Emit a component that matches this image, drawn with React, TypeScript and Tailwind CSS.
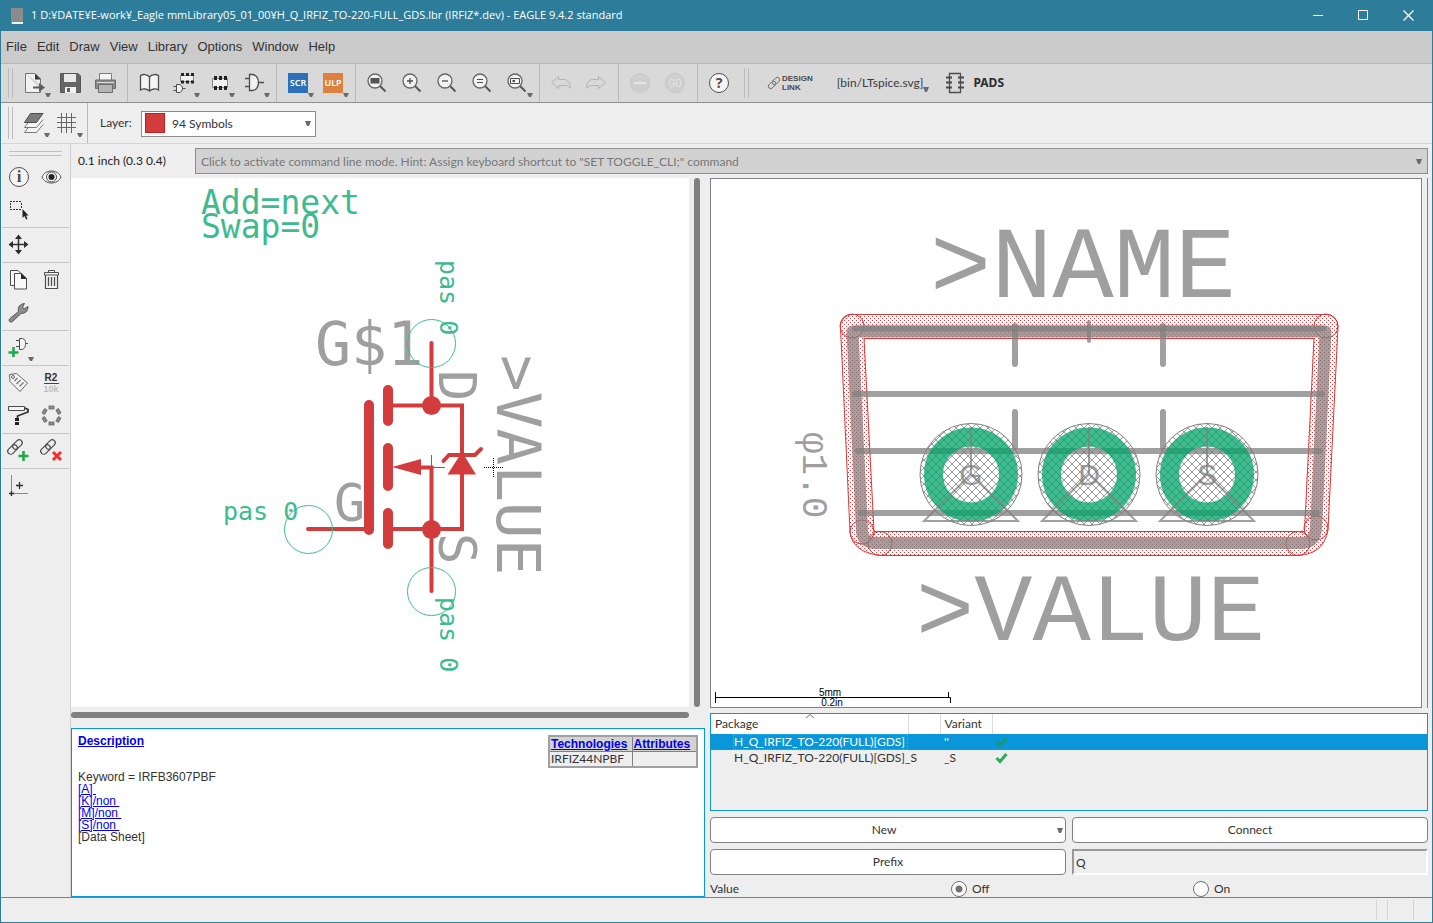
import type { ReactNode } from "react";

function Caret({ className = "" }: { className?: string }) {
  return (
    <svg width="6" height="5" viewBox="0 0 6 5" className={className} aria-hidden="true">
      <path d="M0 0H6L4 5H2Z" fill="#6a6a6a" />
    </svg>
  );
}

/* One slot of the main toolbar, icons are drawn on a 35x38 grid */
function Tool({ label, menu, children }: { label: string; menu?: boolean; children: ReactNode }) {
  return (
    <button type="button" aria-label={label} className="h-[38px] w-[35px] shrink-0">
      <svg width="35" height="38" viewBox="0 0 35 38" fill="none" stroke="#4d4d4d">
        {children}
        {menu && <path d="M27 29H33L31 33H29Z" fill="#6a6a6a" stroke="none" />}
      </svg>
    </button>
  );
}

/* One slot of the left palette, 33x33 grid */
function SideTool({ label, children }: { label: string; children: ReactNode }) {
  return (
    <button type="button" aria-label={label} className="h-[33px] w-[33px] shrink-0">
      <svg width="33" height="33" viewBox="0 0 33 33" fill="none" stroke="#4d4d4d" className="overflow-visible">
        {children}
      </svg>
    </button>
  );
}

function SideGroup({ children }: { children: ReactNode }) {
  return <div className="mx-px flex flex-wrap border-b border-[#c6c6c6] pb-px">{children}</div>;
}

function Sep() {
  return <div className="mx-1 w-px shrink-0 self-stretch bg-[#b9b9b9]" />;
}

function Grip() {
  return <div className="my-1 ml-[7px] w-[5px] shrink-0 self-stretch border-x border-[#bcbcbc]" />;
}

function Magnifier({ children }: { children: ReactNode }) {
  return (
    <>
      <path d="M20 22L25.500 27.500" stroke="#555" strokeWidth="2" />
      <circle cx="15" cy="17" r="7" fill="#f2f2f2" stroke="#666" strokeWidth="1.300" />
      {children}
    </>
  );
}

function ChainLink() {
  return (
    <g transform="rotate(-45 13 13)" strokeWidth="1.200">
      <rect x="4" y="10" width="11" height="6" rx="3" />
      <rect x="11" y="10" width="11" height="6" rx="3" />
    </g>
  );
}

function MainToolbar() {
  return (
    <div className="flex h-[39px] items-center border-b border-[#8f8f8f] bg-[#d9d9d9]">
      <Grip />
      <div className="flex items-center self-stretch pl-[5px]">
        <Tool label="Open" menu>
          <path d="M7.500 9.500H17L22.500 15V20M22.500 26V28.500H7.500V9.500" fill="#f2f2f2" stroke="#777" />
          <path d="M17 9.500V15.500H23Z" fill="#3a3a3a" stroke="none" />
          <path d="M15 22.500H21V19L27 23.500L21 28V24.500H15Z" fill="#5c5c5c" stroke="none" />
        </Tool>
        <Tool label="Save">
          <path d="M7.500 9.500H25L27.500 12V28.500H7.500Z" fill="#666" stroke="#555" />
          <path d="M11 10H23V18H11Z" fill="#e8e8e8" stroke="none" />
          <path d="M12 23H23V29H12Z" fill="#f2f2f2" stroke="none" />
          <path d="M14 24H17V28H14Z" fill="#5f5f5f" stroke="none" />
        </Tool>
        <Tool label="Print">
          <path d="M11.500 16V9.500H23.500V16" fill="#f4f4f4" stroke="#7b7b7b" />
          <path d="M7.500 16H27.500V24.500H7.500Z" fill="#8a8a8a" stroke="#6d6d6d" />
          <path d="M9 18.500H26" stroke="#dcdcdc" />
          <path d="M10.500 20.500H24.500V28.500H10.500Z" fill="#b5b5b5" stroke="#6d6d6d" />
        </Tool>
        <Sep />
        <Tool label="Use library">
          <path
            d="M17.500 13C15 10 11 10 8.500 11.500V26C11 24.500 15 24.500 17.500 27C20 24.500 24 24.500 26.500 26V11.500C24 10 20 10 17.500 13ZM17.500 13V26"
            fill="#f4f4f4"
            strokeWidth="1.300"
          />
        </Tool>
        <Tool label="Device" menu>
          <path d="M13.500 11.500H26.500V17.500H13.500Z" fill="#f0f0f0" stroke="#888" />
          <path d="M14 10.500H27M14 18H27" stroke="#222" strokeWidth="3" strokeDasharray="3 2" />
          <path d="M9.500 20.500H12C14 20.500 15.500 22.500 15.500 24.500C15.500 26.500 14 28.500 12 28.500H9.500ZM6.500 22.500H9.500M6.500 26.500H9.500M15.500 24.500H18.500" fill="#f0f0f0" />
        </Tool>
        <Tool label="Package" menu>
          <path d="M10.500 14.500H25.500V23.500H10.500Z" fill="#f0f0f0" stroke="#888" />
          <path d="M12 14H25M12 24H25" stroke="#222" strokeWidth="4" strokeDasharray="3 2" />
        </Tool>
        <Tool label="Symbol" menu>
          <path d="M12.500 10.500H15C19.500 10.500 21.500 15 21.500 18.500C21.500 22 19.500 26.500 15 26.500H12.500ZM8 14.500H12.500M8 22.500H12.500M21.500 18.500H27" fill="#f0f0f0" strokeWidth="1.300" />
        </Tool>
        <Sep />
        <Tool label="Run script" menu>
          <path d="M7 9H27V29H7Z" fill="#2b70b8" stroke="none" />
          <text x="17" y="22" textAnchor="middle" fill="#fff" stroke="none" className="font-['Noto_Sans'] text-[9px] font-semibold">SCR</text>
        </Tool>
        <Tool label="Run ULP" menu>
          <path d="M7 9H27V29H7Z" fill="#dd8040" stroke="none" />
          <text x="17" y="22" textAnchor="middle" fill="#fff" stroke="none" className="font-['Noto_Sans'] text-[9px] font-semibold">ULP</text>
        </Tool>
        <Sep />
        <Tool label="Zoom to fit">
          <Magnifier><path d="M10.500 14H19.500V19.500H10.500Z" fill="#555" stroke="none" /></Magnifier>
        </Tool>
        <Tool label="Zoom in">
          <Magnifier><path d="M15 14V20M12 17H18" strokeWidth="1.300" /></Magnifier>
        </Tool>
        <Tool label="Zoom out">
          <Magnifier><path d="M12 17H18" strokeWidth="1.300" /></Magnifier>
        </Tool>
        <Tool label="Redraw">
          <Magnifier><path d="M12 15.500H18M12 18.500H18" /></Magnifier>
        </Tool>
        <Tool label="Zoom select" menu>
          <Magnifier>
            <path d="M10.500 14.500H19.500V19.500H10.500Z" />
            <path d="M12.500 16H15V18H12.500Z" fill="#4d4d4d" stroke="none" />
          </Magnifier>
        </Tool>
        <Sep />
        <Tool label="Undo">
          <path d="M7.500 18.500L14.500 12.500V15.500H20C24 15.500 26.500 19 26.500 24.500C24.500 21.500 22 21.500 20 21.500H14.500V24.500Z" stroke="#b4b4b4" />
        </Tool>
        <Tool label="Redo">
          <path d="M26.500 18.500L19.500 12.500V15.500H14C10 15.500 7.500 19 7.500 24.500C9.500 21.500 12 21.500 14 21.500H19.500V24.500Z" stroke="#b4b4b4" />
        </Tool>
        <Sep />
        <Tool label="Stop">
          <circle cx="17" cy="19" r="9.500" fill="#cfcfcf" stroke="#c6c6c6" />
          <path d="M11 19H23" stroke="#e4e4e4" strokeWidth="2" />
        </Tool>
        <Tool label="Go">
          <circle cx="17" cy="19" r="9.500" fill="#cfcfcf" stroke="#c6c6c6" />
          <text x="17" y="23" textAnchor="middle" fill="#e4e4e4" stroke="none" className="font-['Roboto'] text-[10px]">GO</text>
        </Tool>
        <Sep />
        <Tool label="Help">
          <circle cx="17" cy="19" r="9.500" fill="#f5f5f5" />
          <text x="17" y="24" textAnchor="middle" fill="#4d4d4d" stroke="none" className="font-['Noto_Sans'] text-[14px] font-bold">?</text>
        </Tool>
      </div>
      <Grip />
      <button type="button" className="ml-[18px] flex items-center gap-px text-left">
        <svg width="14" height="14" viewBox="4 4 18 18" fill="none" stroke="#666"><ChainLink /></svg>
        <span className="font-['Liberation_Sans'] text-[8px]/[9px] font-bold text-[#4a4a4a]">DESIGN<br />LINK</span>
      </button>
      <button type="button" className="relative ml-6 text-xs text-[#3a3a3a]">
        [bin/LTspice.svg]
        <Caret className="absolute right-[-6px] bottom-[-1px]" />
      </button>
      <button type="button" className="ml-[22px] flex items-center gap-2">
        <svg width="20" height="22" viewBox="0 0 20 22" fill="none" stroke="#4d4d4d">
          <path d="M4.500 1.500H15.500V20.500H4.500Z" strokeWidth="1.300" />
          <path d="M1 5.500H7M1 10.500H7M1 15.500H7M13 5.500H19M13 10.500H19M13 15.500H19" stroke="#4a4a4a" strokeWidth="2.200" />
        </svg>
        <span className="font-['Noto_Sans'] text-[12px] font-bold text-[#2c2c2c]">PADS</span>
      </button>
    </div>
  );
}

function LayerToolbar() {
  return (
    <div className="flex h-[41px] items-center border-b border-[#d4d4d4] bg-[#eee]">
      <Grip />
      <div className="flex items-center self-stretch pl-1">
        <button type="button" aria-label="Layer settings" className="h-[38px] w-[33px]">
          <svg width="33" height="38" viewBox="0 0 33 38" fill="none" stroke="#777">
            <path d="M13.500 20.500L7.500 28.500H19.500L26 20.500" fill="#f6f6f6" />
            <path d="M13.500 15.500L7.500 23.500H19.500L26 15.500" fill="#f6f6f6" />
            <path d="M13.500 9.500H26L19.500 18.500H7.500Z" fill="#7b7b7b" stroke="#4d4d4d" />
            <path d="M27 29H33L31 33H29Z" fill="#6a6a6a" stroke="none" />
          </svg>
        </button>
        <button type="button" aria-label="Grid" className="h-[38px] w-[33px]">
          <svg width="33" height="38" viewBox="0 0 33 38" fill="none" stroke="#666">
            <path d="M11.500 9V29M16.500 9V29M21.500 9V29M7 13.500H26M7 18.500H26M7 23.500H26" />
            <path d="M27 29H33L31 33H29Z" fill="#6a6a6a" stroke="none" />
          </svg>
        </button>
        <Sep />
      </div>
      <label htmlFor="layer" className="ml-2 w-[41px] text-xs text-[#333]">Layer:</label>
      <div className="relative h-[26px] w-[175px]">
        <select id="layer" className="h-full w-full appearance-none border border-[#8c8c8c] bg-white pl-[30px] text-xs text-[#333]">
          <option>94 Symbols</option>
        </select>
        <span className="pointer-events-none absolute top-[3px] left-1 h-5 w-5 border border-[#c32020] bg-[#d33c3c]" />
        <Caret className="pointer-events-none absolute top-[11px] right-[5px]" />
      </div>
    </div>
  );
}

function SidePalette() {
  return (
    <nav className="w-[70px] shrink-0 border-r border-[#d0d0d0] bg-[#eee] pt-[7px]">
      <div className="mx-2 mb-1 h-[5px] border-y border-[#c0c0c0]" />
      <SideGroup>
        <SideTool label="Info">
          <circle cx="17" cy="17" r="9.500" fill="#f6f6f6" />
          <text x="17" y="22" textAnchor="middle" fill="#4d4d4d" stroke="none" className="font-['Liberation_Serif'] text-[17px] font-bold">i</text>
        </SideTool>
        <SideTool label="Show">
          <path d="M7 17C10 9 23 9 26 17C23 25 10 25 7 17Z" fill="#f6f6f6" />
          <circle cx="16.500" cy="17" r="5" />
          <circle cx="16.500" cy="17" r="3" fill="#222" stroke="none" />
        </SideTool>
        <SideTool label="Group">
          <path d="M8 8.500H20M8 16.500H20M8.500 10V16M19.500 10V16" stroke="#333" strokeDasharray="2 1" />
          <path d="M20.500 16V25L22.500 23L24 26.500L25.500 26L24 22.500H26.500Z" fill="#222" stroke="none" />
        </SideTool>
      </SideGroup>
      <SideGroup>
        <SideTool label="Move">
          <path d="M16.500 9V24M9 16.500H24" stroke="#333" strokeWidth="1.500" />
          <path d="M16.500 6.500L20 11H13ZM16.500 26.500L20 22H13ZM6.500 16.500L11 13V20ZM26.500 16.500L22 13V20Z" fill="#2c2c2c" stroke="none" />
        </SideTool>
      </SideGroup>
      <SideGroup>
        <SideTool label="Copy">
          <path d="M12 22.500H8.500V7.500H16L19.500 11" fill="#f8f8f8" />
          <path d="M12.500 10.500H19.500L24.500 15.500V26H12.500Z" fill="#f8f8f8" />
          <path d="M19 10V16H25Z" fill="#2c2c2c" stroke="none" />
        </SideTool>
        <SideTool label="Delete">
          <path d="M10.500 12V25.500H22.500V12" fill="#f6f6f6" strokeWidth="1.200" />
          <path d="M9.500 9.500H23.500V12H9.500ZM13.500 9V7.500H19.500V9" fill="#f6f6f6" />
          <path d="M13.500 14V23M16.500 14V23M19.500 14V23" strokeWidth="1.300" />
        </SideTool>
        <SideTool label="Change">
          <path
            d="M7.500 23L16.500 15.500C15.500 11 18 8 22.500 7.500L20.500 11L22 13L26 10.500C26 15.500 23 17.500 19 17.500L10.500 25.500C8.500 27 6 25 7.500 23Z"
            fill="#8d8d8d"
            stroke="#555"
          />
        </SideTool>
      </SideGroup>
      <SideGroup>
        <SideTool label="Add">
          <path d="M17.500 7.500H19C23 7.500 23.500 10 23.500 12.500C23.500 15 23 18.500 19 18.500H17.500ZM14 9.500H17.500M14 15.500H17.500M23.500 12.500H26" fill="#f6f6f6" />
          <path d="M11.500 16V26M6.500 21.500H16.500" stroke="#22a84c" strokeWidth="2.600" />
          <path d="M26 26H32L30 30H28Z" fill="#6a6a6a" stroke="none" />
        </SideTool>
      </SideGroup>
      <SideGroup>
        <SideTool label="Name">
          <path d="M7.500 8.500L14.500 7.500L25.500 17L18 25.500L8 15.500Z" fill="#f6f6f6" stroke="#666" />
          <circle cx="11" cy="11" r="1.500" stroke="#666" />
          <path d="M12.500 15L15.500 12M14.500 18L18.500 14M17.500 20.500L21.500 16.500" stroke="#777" strokeWidth="1.400" />
        </SideTool>
        <SideTool label="Value">
          <text x="16" y="15" textAnchor="middle" fill="#333" stroke="none" className="font-['Liberation_Sans'] text-[10px] font-bold">R2</text>
          <path d="M9 17.500H24" stroke="#444" />
          <text x="16" y="26" textAnchor="middle" fill="#bdbdbd" stroke="none" className="font-['Liberation_Sans'] text-[9px] font-bold">10k</text>
        </SideTool>
        <SideTool label="Paste format">
          <path d="M6.500 7.500H22.500V11.500H6.500Z" fill="#f6f6f6" />
          <path d="M23 9L26 10.500V13L15.500 17V20" stroke="#333" strokeWidth="1.800" />
          <path d="M15 19V27" stroke="#222" strokeWidth="4" strokeDasharray="3 1" />
        </SideTool>
        <SideTool label="Arrange">
          <g fill="#8a8a8a" stroke="#666" strokeWidth="0.800">
            {[0, 60, 120, 180, 240, 300].map((angle) => (
              <rect key={angle} x="14" y="7" width="5" height="3" transform={`rotate(${angle} 16.500 16.500)`} />
            ))}
          </g>
        </SideTool>
      </SideGroup>
      <SideGroup>
        <SideTool label="Connect module">
          <ChainLink />
          <path d="M21.500 17V27M16.500 22H26.500" stroke="#22a84c" strokeWidth="2.600" />
        </SideTool>
        <SideTool label="Disconnect module">
          <ChainLink />
          <path d="M18 18L26 26M26 18L18 26" stroke="#f03030" strokeWidth="3" />
        </SideTool>
      </SideGroup>
      <div className="mx-px flex">
        <SideTool label="Origin">
          <path d="M9.500 6V24M9.500 24.500H26" stroke="#888" />
          <path d="M7 24.500H12M9.500 22V27M17.500 13V20M14 16.500H21" stroke="#2c2c2c" strokeWidth="1.300" />
        </SideTool>
      </div>
    </nav>
  );
}

function SymbolCanvas() {
  return (
    <svg viewBox="71 178 618 529" className="h-full min-h-0 w-full bg-white" role="img" aria-label="Symbol">
      <g fill="#9f9f9f" className="font-['DejaVu_Sans_Mono',monospace]">
        <text x="315" y="365" className="text-[60px]">G$1</text>
        <text x="334" y="521" className="text-[52px]">G</text>
        <text transform="translate(439 370) rotate(90)" className="text-[52px]">D</text>
        <text transform="translate(439 533) rotate(90)" className="text-[52px]">S</text>
        <text transform="translate(497 355) rotate(90)" className="text-[61px]">&gt;VALUE</text>
      </g>
      <g stroke="#d33c3c" strokeWidth="4" strokeLinecap="round" fill="none">
        <path d="M431.500 343V405M388 405.500H462V529H388M421 467.500H431.500V591M308 529H369" />
        <path d="M369 405V530M388 390V421M388 448V486M388 513V544" strokeWidth="10" />
        <path d="M443.500 461L449 455H475L481 449" />
        <path d="M418 467.500H445M431.500 455V480" strokeWidth="1" strokeLinecap="butt" />
      </g>
      <g fill="#d33c3c">
        <circle cx="431.500" cy="405.500" r="9.500" />
        <circle cx="431.500" cy="529.500" r="9.500" />
        <path d="M392 467L421 459V475ZM462 452L447.500 474.500H476Z" />
      </g>
      <g stroke="#3dbb8f" fill="none">
        <circle cx="431.500" cy="343.500" r="24" />
        <circle cx="308.500" cy="529.500" r="24" />
        <circle cx="431.500" cy="591.500" r="24" />
      </g>
      <g fill="#3dbb8f" className="font-['DejaVu_Sans_Mono',monospace]">
        <text className="text-[33px]">
          <tspan x="201" y="214">Add=next</tspan>
          <tspan x="201" y="238">Swap=0</tspan>
        </text>
        <text x="223" y="520" className="text-[25px]">pas 0</text>
        <text transform="translate(440 260) rotate(90)" className="text-[25px]">pas 0</text>
        <text transform="translate(440 597) rotate(90)" className="text-[25px]">pas 0</text>
      </g>
      <path d="M484 467.500H503M493.500 458V477" stroke="#000" strokeDasharray="1 1" />
    </svg>
  );
}

const pads = [
  { name: "G", x: 971 },
  { name: "D", x: 1089 },
  { name: "S", x: 1207 },
];

function PackageCanvas() {
  return (
    <svg viewBox="711 179 710 528" className="h-full w-full bg-white" role="img" aria-label="Package">
      <defs>
        <pattern id="dots" width="4" height="4" patternUnits="userSpaceOnUse">
          <path d="M0 0H1V1H0ZM2 2H3V3H2Z" fill="#d33c3c" />
        </pattern>
        <pattern id="hatch" width="8" height="8" patternUnits="userSpaceOnUse">
          <path d="M0 0L8 8M0 8L8 0" stroke="#808080" strokeWidth="0.800" />
        </pattern>
      </defs>

      {/* keepout outline */}
      <path d="M852 326H1326L1316 529Q1314 543 1298 543.500H880Q863 543 862 531Z" fill="none" stroke="url(#dots)" strokeWidth="24" strokeLinejoin="round" />
      <g fill="none" stroke="#d33c3c">
        <path d="M852 314.500H1326A12 12 0 0 1 1338 327L1328 530Q1324 554 1298 555.500H880Q852 552 850 532L840.500 327A12 12 0 0 1 852 314.500Z" />
        <path d="M864 338.500H1314L1304.500 531.500H874Z" />
        <circle cx="852" cy="326" r="12" />
        <circle cx="1326" cy="326" r="12" />
        <circle cx="862" cy="532" r="12" />
        <circle cx="880" cy="543.500" r="12" />
        <circle cx="1298" cy="543.500" r="12" />
        <circle cx="1316" cy="528" r="12" />
      </g>

      {/* body */}
      <g fill="none" stroke="#808080" strokeOpacity="0.750" strokeWidth="6" strokeLinecap="round">
        <path d="M852.500 331.500H1325.500L1316 529Q1314 543 1302 543H874Q862 542 862 530Z" strokeWidth="12" strokeLinejoin="round" />
        <path d="M855 328.500H1323M855 394H1322M858 451H1320M861 513H1317" />
        <path d="M1015 326V364M1163 326V364M1015 412V447M1163 412V447" />
        <path d="M1089 322V341" strokeWidth="4" />
      </g>

      {/* pads, the green ring is translucent so the body lines show through */}
      {pads.map((pad) => (
        <g key={pad.name}>
          <circle cx={pad.x} cy="474.500" r="51" fill="url(#hatch)" stroke="#808080" />
          <circle cx={pad.x} cy="474.500" r="37.500" fill="none" stroke="#00a46a" strokeOpacity="0.750" strokeWidth="19" />
          <g transform={`translate(${pad.x} 474)`} stroke="#808080" strokeOpacity="0.750" strokeWidth="2" fill="none">
            <path d="M0 -47V0L-47 47H47L0 0" />
          </g>
          <text x={pad.x} y="485" textAnchor="middle" fill="#808080" fillOpacity="0.750" className="font-['Liberation_Sans'] text-[30px]">
            {pad.name}
          </text>
        </g>
      ))}

      <g fill="#9f9f9f" className="font-['Liberation_Mono',monospace]">
        <text x="930" y="297" className="text-[102px]">&gt;NAME</text>
        <text x="916" y="640" className="text-[97px]">&gt;VALUE</text>
        <text transform="translate(803 432) rotate(90)" className="text-[36px]">φ1.0</text>
      </g>

      {/* scale */}
      <path d="M715.500 692V703M715.500 697.500H950.500V703M948.500 692V697" fill="none" stroke="#000" />
      <g fill="#000" textAnchor="middle" className="font-['Liberation_Sans'] text-[10px]">
        <text x="830" y="696">5mm</text>
        <text x="832" y="706">0.2in</text>
      </g>
    </svg>
  );
}

function Check({ color }: { color: string }) {
  return (
    <svg width="13" height="12" viewBox="0 0 13 12" fill="none" stroke={color} strokeWidth="3" className="ml-[3px]" role="img" aria-label="Connected">
      <path d="M1.500 6L5 9.500L11.500 2" />
    </svg>
  );
}

function PackageTable() {
  return (
    <div className="h-[98px] border border-[#0a97d9] bg-[#eee] text-xs text-[#333]">
      <table className="w-full table-fixed border-collapse text-left">
        <thead>
          <tr className="h-5 bg-white">
            <th className="relative w-[197px] border-r border-[#dcdcdc] pl-1 font-normal leading-4">
              Package
              <svg width="8" height="5" viewBox="0 0 8 5" fill="none" stroke="#777" className="absolute top-0 left-[95px]">
                <path d="M0 4L4 0.500L8 4" />
              </svg>
            </th>
            <th className="w-8 border-r border-[#dcdcdc]" aria-label="3D" />
            <th className="w-[52px] border-r border-[#dcdcdc] pl-1 font-normal leading-4">Variant</th>
            <th aria-label="Status" />
          </tr>
        </thead>
        <tbody>
          <tr className="h-4 bg-[#0a97d9] leading-4 text-white">
            <td className="pl-[22px] whitespace-nowrap">
              <span className="block pl-px outline-1 -outline-offset-1 outline-[#d08a4a] outline-dotted">H_Q_IRFIZ_TO-220(FULL)[GDS]</span>
            </td>
            <td />
            <td className="pl-1">''</td>
            <td><Check color="#189a78" /></td>
          </tr>
          <tr className="h-4 leading-4">
            <td className="pl-[23px] whitespace-nowrap">H_Q_IRFIZ_TO-220(FULL)[GDS]_S</td>
            <td />
            <td className="pl-1">_S</td>
            <td><Check color="#27ae57" /></td>
          </tr>
        </tbody>
      </table>
    </div>
  );
}

function DescriptionPanel() {
  return (
    <section className="flex h-[169px] justify-between border border-[#0a97d9] bg-white px-[6px] pt-[6px] font-['Liberation_Sans'] text-xs text-[#333]">
      <div>
        <a href="#description" className="block leading-3 font-bold text-[#0000ee] underline">Description</a>
        <div className="pt-6 text-[12px]/[12px]">
          <p>Keyword = IRFB3607PBF</p>
          {["[A]", "[K]/non", "[M]/non", "[S]/non"].map((item) => (
            <a key={item} href="#part" className="block w-fit whitespace-pre text-[#0000ee] underline">{item + " "}</a>
          ))}
          <p>[Data Sheet]</p>
        </div>
      </div>
      <table className="w-[150px] self-start border-2 border-[#a0a0a0] text-left leading-[14px]">
        <thead className="bg-[#d3d3d3]">
          <tr>
            <th className="w-[83px] border border-[#808080] p-0 px-px"><a href="#technologies" className="text-[#0000ee] underline">Technologies</a></th>
            <th className="border border-[#808080] p-0 px-px"><a href="#attributes" className="text-[#0000ee] underline">Attributes</a></th>
          </tr>
        </thead>
        <tbody className="bg-[#eee] font-['Lato']">
          <tr>
            <td className="border border-[#808080] px-px">IRFIZ44NPBF</td>
            <td className="border border-[#808080]" />
          </tr>
        </tbody>
      </table>
    </section>
  );
}

const buttonStyle = "relative h-[26px] rounded border border-[#808080] bg-white";
const radioStyle = "h-4 w-4 appearance-none rounded-full border border-[#707070] bg-white checked:bg-[radial-gradient(#707070_3px,#fff_4px)]";

export default function App() {
  return (
    <div className="flex h-screen flex-col border border-t-0 border-[#2d7d9a] bg-[#eee] font-['Lato',sans-serif]">
      {/* Title bar */}
      <header className="flex h-[31px] shrink-0 items-center bg-[#2d7d9a] text-white">
        <svg width="12" height="16" viewBox="0 0 12 16" className="ml-[10px]">
          <path d="M0 0H12V16H0Z" fill="#8b8b8b" />
          <path d="M1 14H12V16H1Z" fill="#f0f0f0" />
        </svg>
        <h1 className="ml-2 font-['Open_Sans',sans-serif] text-[11px]">
          1 D:¥DATE¥E-work¥_Eagle mmLibrary05_01_00¥H_Q_IRFIZ_TO-220-FULL_GDS.lbr (IRFIZ*.dev) - EAGLE 9.4.2 standard
        </h1>
        <div className="ml-auto flex pr-px">
          <button type="button" aria-label="Minimize" className="flex w-[45px] justify-center">
            <svg width="11" height="11" viewBox="0 0 11 11" stroke="#fff"><path d="M0 5.500H10" /></svg>
          </button>
          <button type="button" aria-label="Maximize" className="flex w-[45px] justify-center">
            <svg width="11" height="11" viewBox="0 0 11 11" fill="none" stroke="#fff"><path d="M0.500 0.500H9.500V9.500H0.500Z" /></svg>
          </button>
          <button type="button" aria-label="Close" className="flex w-[45px] justify-center">
            <svg width="11" height="11" viewBox="0 0 11 11" stroke="#fff" strokeWidth="1.300"><path d="M0.500 0.500L10.500 10.500M10.500 0.500L0.500 10.500" /></svg>
          </button>
        </div>
      </header>

      {/* Menu */}
      <nav className="flex h-[33px] shrink-0 items-center gap-[10px] border-b border-[#b5b5b5] bg-[#cbcbcb] pl-[5px] font-['Liberation_Sans'] text-[13px] text-[#333]">
        {["File", "Edit", "Draw", "View", "Library", "Options", "Window", "Help"].map((item) => (
          <button key={item} type="button">{item}</button>
        ))}
      </nav>

      <MainToolbar />
      <LayerToolbar />

      <div className="flex min-h-0 flex-1">
        <SidePalette />

        <main className="flex min-w-0 flex-1 flex-col">
          {/* Command line */}
          <div className="flex h-[34px] shrink-0 items-center pr-1 pl-[7px]">
            <label htmlFor="command" className="w-[117px] text-xs text-[#222]">0.1 inch (0.3 0.4)</label>
            <div className="relative flex-1">
              <input
                id="command"
                type="text"
                readOnly
                placeholder={'Click to activate command line mode. Hint: Assign keyboard shortcut to "SET TOGGLE_CLI;" command'}
                className="block h-[26px] w-full border border-[#8f8f8f] bg-[#d2d2d2] px-[5px] text-xs text-[#777] placeholder:text-[#777]"
              />
              <Caret className="absolute top-[11px] right-[6px]" />
            </div>
          </div>

          <div className="flex min-h-0 flex-1 gap-[5px] pr-1">
            {/* Symbol side */}
            <div className="flex min-w-0 flex-[634] flex-col">
              <div className="flex min-h-0 flex-1 gap-[5px] pr-[5px]">
                <SymbolCanvas />
                <div className="w-[6px] shrink-0 rounded-full bg-[#808080]" />
              </div>
              <div className="mt-[5px] mr-4 mb-[10px] h-[6px] shrink-0 rounded-full bg-[#808080]" />
              <DescriptionPanel />
            </div>

            {/* Package side */}
            <div className="flex min-w-0 flex-[718] flex-col text-xs text-[#333]">
              <div className="mb-[5px] flex min-h-0 flex-1 border-r border-[#808088] pr-[5px]">
                <div className="min-w-0 flex-1 border border-[#808088]">
                  <PackageCanvas />
                </div>
              </div>
              <PackageTable />
              <div className="mt-[6px] grid grid-cols-2 gap-[6px]">
                <button type="button" className={buttonStyle}>
                  <span className="pr-2">New</span>
                  <Caret className="absolute top-[10px] right-[2px]" />
                </button>
                <button type="button" className={buttonStyle}>Connect</button>
                <button type="button" className={buttonStyle}>Prefix</button>
                <input
                  type="text"
                  aria-label="Prefix"
                  defaultValue="Q"
                  className="h-[26px] w-full border-2 border-t-[#999] border-r-white border-b-white border-l-[#999] bg-[#eee] px-[2px]"
                />
              </div>
              <fieldset className="mt-[6px] flex h-4 items-center">
                <legend className="float-left w-[241px] leading-4">Value</legend>
                <label className="flex w-[242px] items-center gap-[5px]">
                  <input type="radio" name="value" defaultChecked className={radioStyle} />
                  Off
                </label>
                <label className="flex items-center gap-[5px]">
                  <input type="radio" name="value" className={radioStyle} />
                  On
                </label>
              </fieldset>
            </div>
          </div>
        </main>
      </div>

      {/* Status bar */}
      <footer className="flex h-[25px] shrink-0 justify-end border-t border-[#808080] py-[2px] pr-[18px]">
        <div className="w-[11px] border-l border-[#d4d4d4]" />
        <div className="w-[27px] border-x border-[#d4d4d4]" />
      </footer>
    </div>
  );
}
